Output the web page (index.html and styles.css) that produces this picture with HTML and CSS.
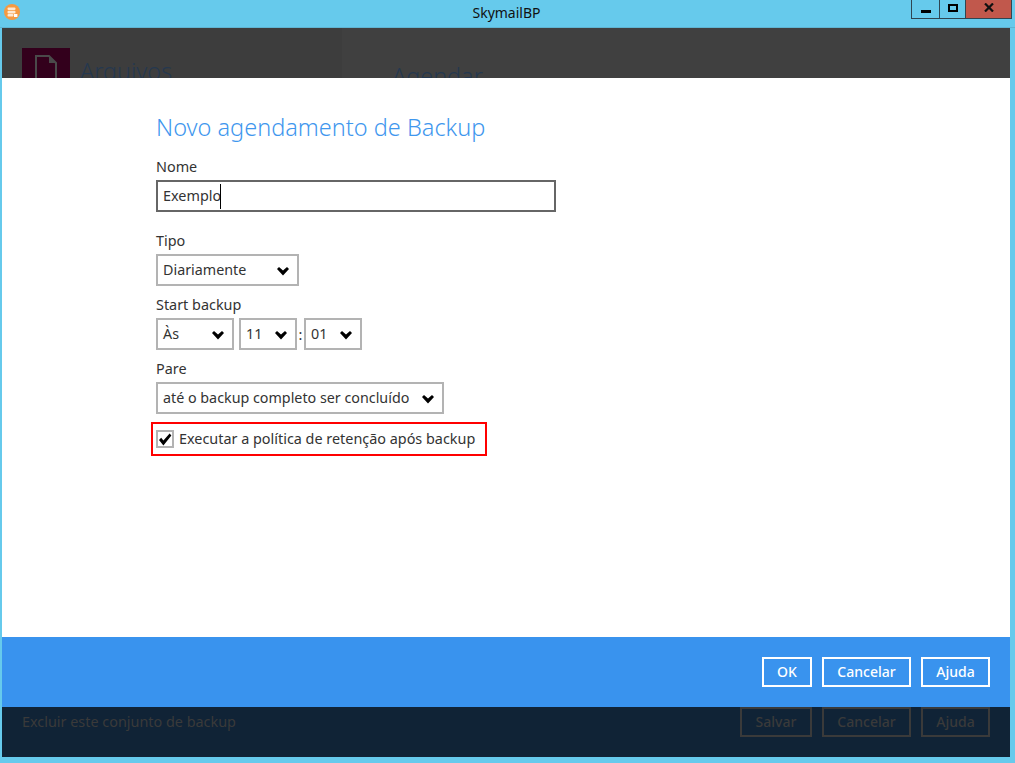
FILE: index.html
```html
<!DOCTYPE html>
<html lang="pt">
<head>
<meta charset="utf-8">
<title>SkymailBP</title>
<link rel="stylesheet" href="styles.css">
</head>
<body>
<div class="window">
  <header class="titlebar">
    <svg class="app-icon" width="16" height="16" viewBox="0 0 16 16">
      <circle cx="8" cy="8" r="8" fill="#f59a42"/>
      <rect x="3.5" y="3.5" width="8" height="2.6" rx="1" fill="#fde9d3"/>
      <rect x="3.5" y="6.8" width="8" height="2.6" rx="1" fill="#fde9d3"/>
      <rect x="3.5" y="10" width="6" height="2.6" rx="1" fill="#fde9d3"/>
      <rect x="10" y="10" width="3.4" height="3" fill="#fff"/>
    </svg>
    <span class="title">SkymailBP</span>
    <div class="controls">
      <div class="ctl ctl-min"><span class="min-glyph"></span></div>
      <div class="ctl ctl-max"><span class="max-glyph"></span></div>
      <div class="ctl ctl-close">
        <svg width="10" height="9" viewBox="0 0 10 9"><path d="M1 0.5 L9 8.5 M9 0.5 L1 8.5" stroke="#111" stroke-width="2.2" fill="none"/></svg>
      </div>
    </div>
  </header>
  <div class="app">
    <div class="dim-top">
      <div class="side">
        <div class="side-icon">
          <svg width="24" height="30" viewBox="0 0 24 30"><path d="M2 2 H15 L22 9 V30 H2 Z" fill="none" stroke="#4a4a4a" stroke-width="2"/><path d="M15 2 L22 9 H15 Z" fill="#4a4a4a"/></svg>
        </div>
        <span class="side-label">Arquivos</span>
      </div>
      <div class="pane"><span class="pane-label">Agendar</span></div>
    </div>
    <main class="dialog">
      <h1 class="heading">Novo agendamento de Backup</h1>
      <div class="field field-name">
        <label class="label">Nome</label>
        <div class="input">Exemplo<span class="caret"></span></div>
      </div>
      <div class="field">
        <label class="label">Tipo</label>
        <div class="select w-type"><span>Diariamente</span><svg class="chev" viewBox="0 0 12 9"><path d="M0 2 L2 0 L6 3.5 L10 0 L12 2 L6 8.5 Z" fill="#000"/></svg></div>
      </div>
      <div class="field">
        <label class="label">Start backup</label>
        <div class="time-row">
          <div class="select w-at"><span>Às</span><svg class="chev" viewBox="0 0 12 9"><path d="M0 2 L2 0 L6 3.5 L10 0 L12 2 L6 8.5 Z" fill="#000"/></svg></div>
          <div class="select w-num"><span>11</span><svg class="chev" viewBox="0 0 12 9"><path d="M0 2 L2 0 L6 3.5 L10 0 L12 2 L6 8.5 Z" fill="#000"/></svg></div>
          <span class="colon">:</span>
          <div class="select w-num"><span>01</span><svg class="chev" viewBox="0 0 12 9"><path d="M0 2 L2 0 L6 3.5 L10 0 L12 2 L6 8.5 Z" fill="#000"/></svg></div>
        </div>
      </div>
      <div class="field">
        <label class="label">Pare</label>
        <div class="select w-stop"><span>até o backup completo ser concluído</span><svg class="chev" viewBox="0 0 12 9"><path d="M0 2 L2 0 L6 3.5 L10 0 L12 2 L6 8.5 Z" fill="#000"/></svg></div>
      </div>
      <div class="retention">
        <span class="check">
          <svg width="14" height="13" viewBox="0 0 14 13"><path d="M1 7 L3.2 4.8 L5.4 7.4 L11.6 0.6 L13.4 2.4 L5.4 12.4 Z" fill="#000"/></svg>
        </span>
        <span class="retention-text">Executar a política de retenção após backup</span>
      </div>
    </main>
    <footer class="actions">
      <button class="btn b-ok">OK</button>
      <button class="btn b-cancel">Cancelar</button>
      <button class="btn b-help">Ajuda</button>
    </footer>
    <div class="dim-bottom">
      <span class="delete">Excluir este conjunto de backup</span>
      <div class="dim-buttons">
        <span class="dim-btn b-ok">Salvar</span>
        <span class="dim-btn b-cancel">Cancelar</span>
        <span class="dim-btn b-help">Ajuda</span>
      </div>
    </div>
  </div>
</div>
</body>
</html>
```
FILE: styles.css
```css
* { box-sizing: border-box; }
html, body { margin: 0; padding: 0; }
body {
  width: 1015px;
  height: 763px;
  overflow: hidden;
  background: #66caec;
  font-family: "Noto Sans", "Open Sans", sans-serif;
  font-size: 14.4px;
  color: #333;
}
.window { display: flex; flex-direction: column; height: 763px; }

.titlebar {
  height: 28px;
  flex: none;
  display: flex;
  align-items: flex-start;
  position: relative;
  border-bottom: 1px solid #5fb4d2;
}
.app-icon { position: absolute; left: 4px; top: 4px; }
.title {
  width: 100%;
  text-align: center;
  font-size: 14px;
  line-height: 26px;
  color: #111;
  padding-right: 2px;
}
.controls {
  position: absolute;
  left: 911px;
  top: 0;
  display: flex;
  height: 19px;
  border: 1px solid #2f4653;
  border-top: 0;
}
.ctl { height: 18px; display: flex; align-items: center; justify-content: center; }
.ctl-min { width: 28px; border-right: 1px solid #2f4653; }
.ctl-max { width: 26px; border-right: 1px solid #2f4653; }
.ctl-close { width: 45px; background: #c1584c; }
.min-glyph { width: 10px; height: 3px; background: #000; margin-top: 4px; }
.max-glyph { width: 10px; height: 8px; border: 2px solid #000; margin-top: -3px; }
.ctl-close svg { margin-top: -3px; }

.app {
  flex: none;
  width: 1008px;
  height: 729px;
  margin-left: 2px;
  display: flex;
  flex-direction: column;
}
.dim-top {
  height: 50px;
  flex: none;
  overflow: hidden;
  display: flex;
  background: #404040;
}
.side {
  width: 340px;
  flex: none;
  display: flex;
  gap: 10px;
  padding: 20px 0 0 20px;
  background: #3d3d3d;
}
.side-icon {
  width: 48px;
  height: 48px;
  flex: none;
  background: #33001c;
  display: flex;
  justify-content: center;
  padding-top: 6px;
}
.side-label { font-size: 23.4px; font-weight: 300; line-height: 47px; color: #25384f; white-space: nowrap; }
.pane { flex: 1; padding: 31px 0 0 50px; }
.pane-label { font-size: 23.4px; font-weight: 300; line-height: 34px; color: #25384f; }

.dialog {
  height: 559px;
  flex: none;
  background: #fff;
  padding: 32px 0 0 154px;
}
.heading {
  margin: 0;
  height: 38px;
  font-size: 23.5px;
  font-weight: 300;
  line-height: 34px;
  color: #3f97ee;
}
.field-name { margin-bottom: 10px; }
.label { display: block; height: 32px; padding-top: 9px; line-height: 20px; color: #333; }
.input {
  width: 400px;
  height: 32px;
  border: 2px solid #666;
  padding: 0 5px;
  line-height: 28px;
  color: #333;
  display: flex;
  align-items: center;
}
.caret { width: 1px; height: 25px; background: #000; margin-left: -1px; }
.select {
  height: 32px;
  border: 2px solid #b3b3b3;
  padding: 0 8px 0 5px;
  display: flex;
  align-items: center;
  justify-content: space-between;
  flex: none;
  line-height: 28px;
  font-size: 14.3px;
}
.chev { width: 12px; height: 9px; flex: none; margin-top: 2px; }
.w-type { width: 143px; }
.w-at { width: 78px; margin-right: 5px; }
.w-num { width: 58px; }
.w-stop { width: 288px; }
.time-row { display: flex; align-items: center; }
.colon { width: 7px; text-align: center; }
.retention {
  width: 336px;
  height: 34px;
  margin: 8px 0 0 -5px;
  border: 2px solid #f00;
  display: flex;
  align-items: center;
  gap: 5px;
  padding: 0 0 0 3px;
  color: #333;
}
.retention-text { margin-top: -2px; }
.check {
  width: 18px;
  height: 18px;
  flex: none;
  border: 2px solid #b3b3b3;
  display: flex;
  align-items: center;
  justify-content: center;
}

.actions {
  height: 70px;
  flex: none;
  background: #3993ee;
  display: flex;
  align-items: center;
  justify-content: flex-end;
  gap: 10px;
  padding: 0 20px 0 0;
}
.btn {
  height: 30px;
  border: 2px solid #fff;
  background: transparent;
  color: #fff;
  font: 500 14px "Noto Sans", "Open Sans", sans-serif;
  padding: 0 0 2px;
}
.b-ok { width: 50px; }
.b-cancel { width: 89px; }
.b-help { width: 69px; }

.dim-bottom {
  height: 50px;
  flex: none;
  background: #102336;
  display: flex;
  align-items: flex-start;
  justify-content: space-between;
  padding: 0 20px;
}
.delete { line-height: 30px; color: #3a3a3a; }
.dim-buttons { display: flex; gap: 10px; }
.dim-btn {
  height: 30px;
  border: 2px solid #3a3a3a;
  color: #3a3a3a;
  font-size: 14px;
  font-weight: 500;
  text-align: center;
  line-height: 26px;
}
.dim-btn.b-ok { width: 72px; }
```
